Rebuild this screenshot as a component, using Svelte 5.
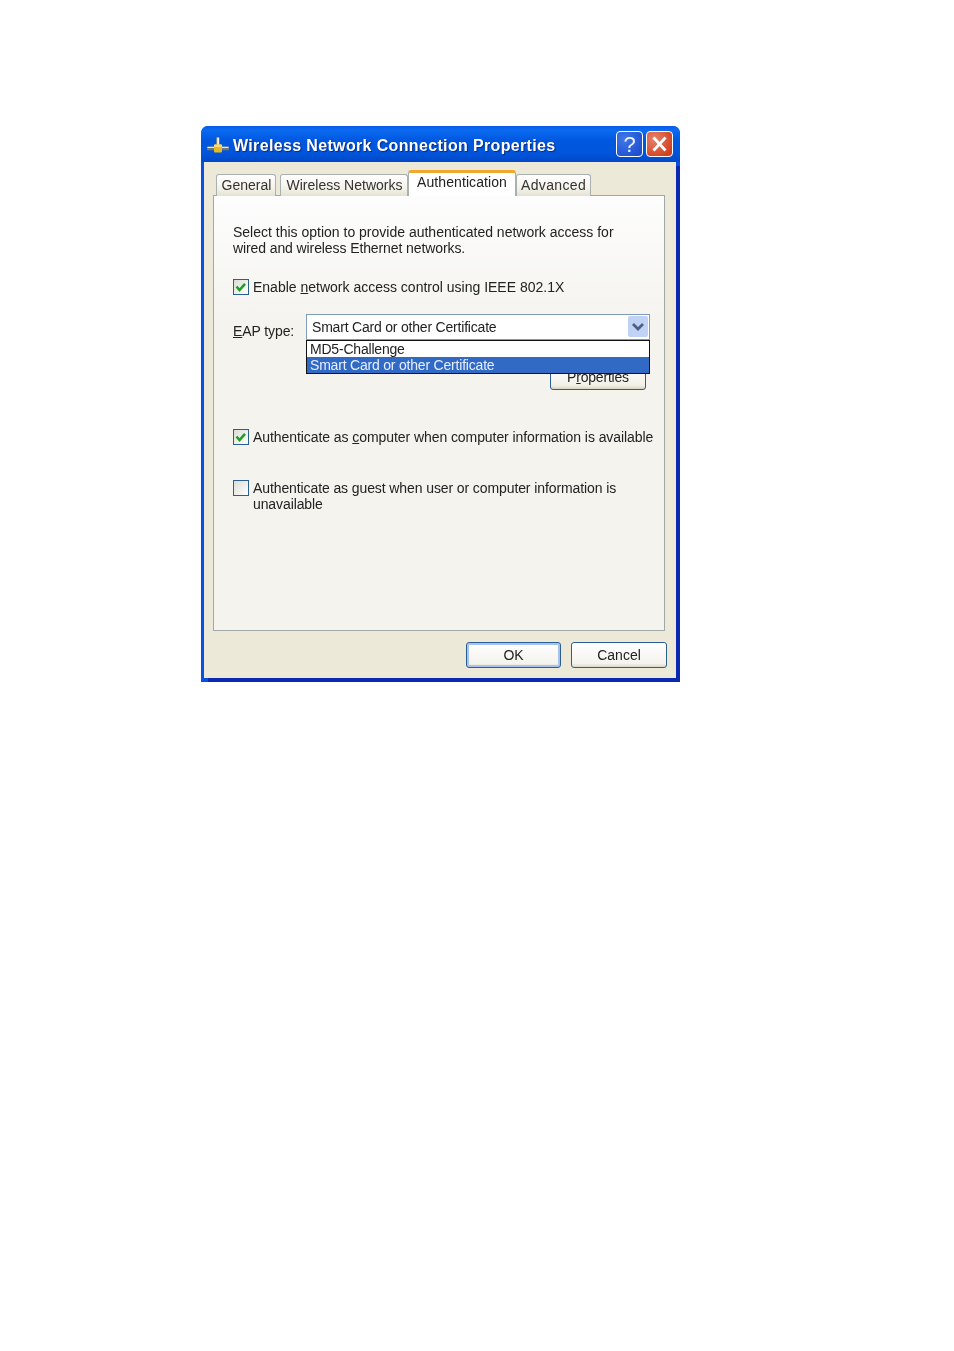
<script>
  const tabs = [
    { label: 'General', w: 60, gap: 4, pad: 1 },
    { label: 'Wireless Networks', w: 128, gap: 0, pad: 1 },
    { label: 'Authentication', w: 108, gap: 0, active: true, pad: 0, ls: 0.08 },
    { label: 'Advanced', w: 75, gap: 0, pad: 0, ls: 0.35 }
  ];
</script>

<div class="page">
  <div class="win">
    <div class="title">
      <svg class="net" viewBox="0 0 22 17" width="22" height="17">
        <path d="M0 11.5H22" stroke="#77776c" stroke-width="3.6"/>
        <path d="M0.5 10.4H21.5" stroke="#ecece4" stroke-width="1.3"/>
        <path d="M11 0.5V8" stroke="#f2f0e0" stroke-width="2.4"/>
        <path d="M9.7 0.5V8" stroke="#8a8a70" stroke-width="0.8"/>
        <rect x="7" y="7.5" width="8" height="8" rx="1" fill="#e9b824"/>
        <rect x="7" y="7.5" width="8" height="2.5" rx="1" fill="#f7de78"/>
      </svg>
      <span class="ttext">Wireless Network Connection Properties</span>
      <div class="tbtn help">
        <svg viewBox="0 0 27 26" width="27" height="26"><text x="13.5" y="21" text-anchor="middle" class="q">?</text></svg>
      </div>
      <div class="tbtn close">
        <svg viewBox="0 0 27 26" width="27" height="26"><path d="M7.5 6.5L19.5 19.5M19.5 6.5L7.5 19.5" stroke="#fff" stroke-width="2.8" fill="none"/></svg>
      </div>
    </div>
    <div class="client">
      <div class="tabs">
        {#each tabs as t}
          <div class="tab" class:active={t.active} style="width:{t.w}px;margin-right:{t.gap}px;padding-left:{t.pad}px;letter-spacing:{t.ls ?? 0}px">{t.label}</div>
        {/each}
      </div>
      <div class="panel">
        <p class="intro">Select this option to provide authenticated network access for<br/><span class="tight1">wired and wireless Ethernet networks.</span></p>
        <div class="check r1">
          <span class="box"><svg viewBox="0 0 16 16" width="16" height="16"><path d="M3.5 7.5L6.5 11L12 4.8" stroke="#21a121" stroke-width="2.6" fill="none"/></svg></span>
          <span>Enable <u>n</u>etwork access control using IEEE 802.1X</span>
        </div>
        <div class="eap">
          <span class="eaplabel"><u>E</u>AP type:</span>
          <div class="combo">
            <span>Smart Card or other Certificate</span>
            <span class="arrow"><svg viewBox="0 0 20 21" width="20" height="21"><path d="M5 8L10 13L15 8" stroke="#4d6185" stroke-width="2.8" fill="none"/></svg></span>
          </div>
          <div class="list">
            <div class="opt">MD5-Challenge</div>
            <div class="opt sel">Smart Card or other Certificate</div>
          </div>
          <div class="props">P<u>r</u>operties</div>
        </div>
        <div class="check r2">
          <span class="box"><svg viewBox="0 0 16 16" width="16" height="16"><path d="M3.5 7.5L6.5 11L12 4.8" stroke="#21a121" stroke-width="2.6" fill="none"/></svg></span>
          <span>Authenticate as <u>c</u>omputer when computer information is available</span>
        </div>
        <div class="check r3">
          <span class="box"></span>
          <span>Authenticate as <u>g</u>uest when user or computer information is<br/>unavailable</span>
        </div>
      </div>
      <div class="buttons">
        <div class="btn default">OK</div>
        <div class="btn cancel">Cancel</div>
      </div>
    </div>
  </div>
</div>

<style>
  :global(body) { margin: 0; background: #fff; }
  .page { padding: 126px 0 0 201px; height: 1225px; font-family: "Liberation Sans", Arial, sans-serif; font-size: 14px; color: #222; }
  .win { width: 479px; height: 556px; display: flex; flex-direction: column; box-sizing: border-box; border-radius: 7px 7px 0 0; overflow: hidden; background: #0a4fe0; filter: blur(0.4px); }
  .title { height: 36px; flex: none; display: flex; align-items: center; padding: 0 7px 0 6px; box-sizing: border-box;
    background: linear-gradient(#0a5be8 0%, #0a6af0 12%, #0058e0 40%, #0055dc 75%, #0048c8 100%); }
  .net { margin-right: 4px; margin-top: 2px; }
  .ttext { flex: 1; color: #fff; font-weight: bold; font-size: 16px; letter-spacing: 0.35px; text-shadow: 1px 1px 1px #0a2a80; padding-top: 3px; }
  .tbtn { width: 27px; height: 26px; box-sizing: border-box; border: 1px solid #fff; border-radius: 4px; overflow: hidden; }
  .tbtn svg { display: block; margin: -1px; }
  .help { background: radial-gradient(circle at 30% 30%, #3f78ea, #2050d0 80%); }
  .close { background: radial-gradient(circle at 30% 30%, #e8826a, #d04020 80%); margin-left: 3px; }
  .q { fill: #f0f4ff; font: 22px "Liberation Sans", sans-serif; }
  .client { flex: 1; margin: 0 4px 4px 3px; background: #ece9d8; display: flex; flex-direction: column; padding: 8px 0 0 9px; box-shadow: 4px 4px 0 #0a28b0; }
  .tabs { display: flex; align-items: flex-end; height: 26px; padding-left: 3px; position: relative; z-index: 1; margin-bottom: -1px; }
  .tab { height: 22px; box-sizing: border-box; border: 1px solid #a8b0b0; border-bottom: none; border-radius: 3px 3px 0 0; background: linear-gradient(#fff, #f2f0e6 70%, #e4e1d2); text-align: center; line-height: 21px; color: #333; white-space: nowrap; }
  .tab.active { height: 26px; background: #fff; border-top: 3px solid #f0a830; border-color: #f0a830 #a8b0b0 transparent #a8b0b0; line-height: 19px; color: #222; }
  .panel { width: 452px; height: 436px; box-sizing: border-box; border: 1px solid #a0a8a8; background: linear-gradient(#fdfdfd, #f4f3ee 30%, #f4f3ee); padding: 28px 0 0 19px; }
  .intro { margin: 0; line-height: 16px; }
  .tight1 { letter-spacing: -0.1px; }
  .check { display: flex; align-items: flex-start; line-height: 16px; }
  .check > span:last-child { margin-left: 4px; white-space: nowrap; }
  .r1 { margin-top: 23px; }
  .r2 { margin-top: 39px; letter-spacing: -0.07px; }
  .r3 { margin-top: 35px; letter-spacing: -0.1px; }
  .box { width: 16px; height: 16px; flex: none; box-sizing: border-box; border: 1.5px solid #2a5f8f; background: linear-gradient(135deg, #dcdcd7, #fff); display: block; }
  .box svg { display: block; margin: -1.5px; }
  .eap { position: relative; height: 75px; margin-top: 20px; }
  .eaplabel { position: absolute; left: 0; top: 8px; line-height: 16px; letter-spacing: -0.1px; }
  .combo { position: absolute; left: 73px; top: -1px; width: 344px; height: 26px; box-sizing: border-box; border: 1px solid #7f9db9; background: #fff; padding-left: 5px; line-height: 24px; z-index: 2; letter-spacing: -0.2px; }
  .arrow { position: absolute; right: 1px; top: 1px; width: 20px; height: 21px; background: #c1d2f7; border-radius: 2px; }
  .arrow svg { display: block; }
  .list { position: absolute; left: 73px; top: 25px; width: 344px; height: 34px; box-sizing: border-box; border: 1px solid #111; background: #fff; z-index: 3; line-height: 16px; letter-spacing: -0.2px; }
  .opt { padding-left: 3px; height: 16px; white-space: nowrap; color: #222; }
  .opt.sel { background: #316ac5; color: #e8eeff; }
  .props { position: absolute; left: 317px; top: 50px; width: 96px; height: 25px; box-sizing: border-box; border: 1px solid #2a5f8f; border-radius: 3px; background: linear-gradient(#fff, #f2f0e6 85%, #d8d4c4); text-align: center; line-height: 23px; letter-spacing: -0.2px; }
  .buttons { display: flex; gap: 10px; padding: 11px 0 0 253px; }
  .btn { width: 95px; height: 26px; box-sizing: border-box; border: 1.5px solid #2a5f8f; border-radius: 3px; background: linear-gradient(#fff, #f4f3ee 85%, #dcd8c8); text-align: center; line-height: 24px; }
  .btn.cancel { width: 96px; }
  .btn.default { box-shadow: inset 0 0 0 2px #a8c2ee; }
</style>
